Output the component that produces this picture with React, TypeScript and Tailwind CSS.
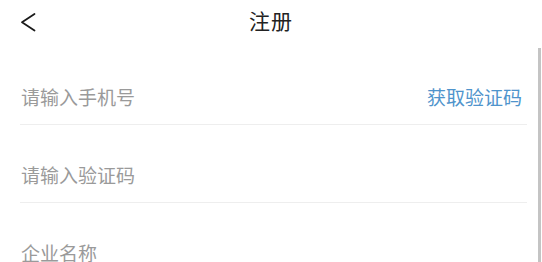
export default function App() {
  const fields = [
    { placeholder: "请输入手机号", action: "获取验证码" },
    { placeholder: "请输入验证码" },
    { placeholder: "企业名称" },
  ];

  return (
    <div className="relative w-[542px] h-[262px] overflow-hidden bg-white font-['Noto_Sans_CJK_SC',sans-serif]">
      {/* 顶部导航 */}
      <div className="relative h-[40px] flex items-center justify-center">
        <svg className="absolute left-[20px] top-[12px] w-[18px] h-[20px]" viewBox="0 0 18 20" fill="none">
          <polyline points="14.5,2 2,10.3 14.5,18.5" stroke="#1a1a1a" strokeWidth="1.8" strokeLinecap="round" strokeLinejoin="round" />
        </svg>
        <span className="text-[21px] leading-none text-[#222] tracking-[1px]">注册</span>
      </div>

      {/* 表单 */}
      <div className="mt-[7px] ml-[20px] mr-[15px]">
        {fields.map((f) => (
          <div
            key={f.placeholder}
            className="flex items-center justify-between pt-[37px] pb-[14px] border-b border-[#eeeeee]"
          >
            <span className="pl-[1px] text-[19px] leading-[26px] text-[#9a9a9a]">{f.placeholder}</span>
            {f.action && (
              <span className="pr-[5px] text-[19px] leading-[26px] text-[#4f94cc]">{f.action}</span>
            )}
          </div>
        ))}
      </div>

      {/* 滚动条 */}
      <div className="absolute right-[1px] top-[48px] bottom-0 w-[3px] bg-[#c4c4c4]" />
    </div>
  );
}
